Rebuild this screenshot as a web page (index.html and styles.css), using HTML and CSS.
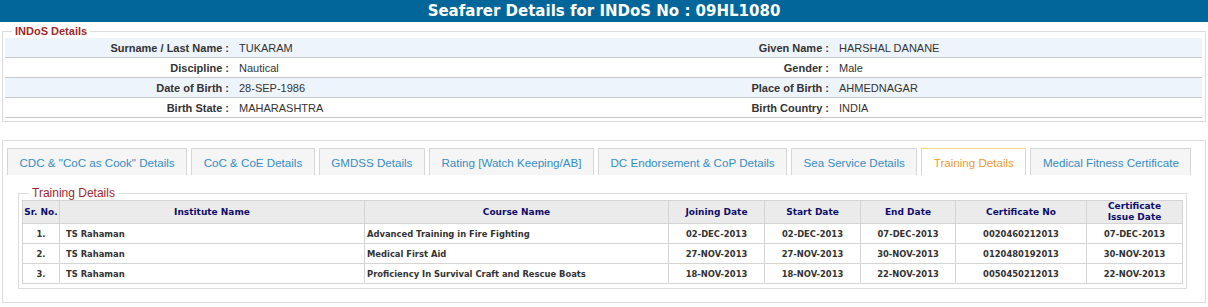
FILE: index.html
```html
<!DOCTYPE html>
<html lang="en">
<head>
    <meta charset="UTF-8">
    <meta name="viewport" content="width=device-width, initial-scale=1.0">
    <title>Seafarer Details</title>
    <link rel="stylesheet" href="styles.css">
</head>
<body>
    <div class="page-title">Seafarer Details for INDoS No : 09HL1080</div>

    <fieldset class="indos">
        <legend>INDoS Details</legend>
        <table class="info">
            <colgroup>
                <col style="width: 228px">
                <col style="width: 372px">
                <col style="width: 228px">
                <col>
            </colgroup>
            <tr class="alt">
                <th>Surname / Last Name :</th><td>TUKARAM</td>
                <th>Given Name :</th><td>HARSHAL DANANE</td>
            </tr>
            <tr>
                <th>Discipline :</th><td>Nautical</td>
                <th>Gender :</th><td>Male</td>
            </tr>
            <tr class="alt">
                <th>Date of Birth :</th><td>28-SEP-1986</td>
                <th>Place of Birth :</th><td>AHMEDNAGAR</td>
            </tr>
            <tr>
                <th>Birth State :</th><td>MAHARASHTRA</td>
                <th>Birth Country :</th><td>INDIA</td>
            </tr>
        </table>
    </fieldset>

    <div class="tab-box">
        <ul class="tabs">
            <li>CDC &amp; "CoC as Cook" Details</li>
            <li>CoC &amp; CoE Details</li>
            <li>GMDSS Details</li>
            <li>Rating [Watch Keeping/AB]</li>
            <li>DC Endorsement &amp; CoP Details</li>
            <li>Sea Service Details</li>
            <li class="active">Training Details</li>
            <li>Medical Fitness Certificate</li>
        </ul>

        <fieldset class="training">
            <legend>Training Details</legend>
            <table class="grid">
                <colgroup>
                    <col style="width: 37px">
                    <col style="width: 305px">
                    <col style="width: 304px">
                    <col style="width: 96px">
                    <col style="width: 96px">
                    <col style="width: 95px">
                    <col style="width: 131px">
                    <col style="width: 96px">
                </colgroup>
                <thead>
                    <tr>
                        <th>Sr. No.</th>
                        <th>Institute Name</th>
                        <th>Course Name</th>
                        <th>Joining Date</th>
                        <th>Start Date</th>
                        <th>End Date</th>
                        <th>Certificate No</th>
                        <th>Certificate<br>Issue Date</th>
                    </tr>
                </thead>
                <tbody>
                    <tr>
                        <td class="c">1.</td>
                        <td class="inst">TS Rahaman</td>
                        <td class="course">Advanced Training in Fire Fighting</td>
                        <td class="c">02-DEC-2013</td>
                        <td class="c">02-DEC-2013</td>
                        <td class="c">07-DEC-2013</td>
                        <td class="c">0020460212013</td>
                        <td class="c">07-DEC-2013</td>
                    </tr>
                    <tr>
                        <td class="c">2.</td>
                        <td class="inst">TS Rahaman</td>
                        <td class="course">Medical First Aid</td>
                        <td class="c">27-NOV-2013</td>
                        <td class="c">27-NOV-2013</td>
                        <td class="c">30-NOV-2013</td>
                        <td class="c">0120480192013</td>
                        <td class="c">30-NOV-2013</td>
                    </tr>
                    <tr>
                        <td class="c">3.</td>
                        <td class="inst">TS Rahaman</td>
                        <td class="course">Proficiency In Survival Craft and Rescue Boats</td>
                        <td class="c">18-NOV-2013</td>
                        <td class="c">18-NOV-2013</td>
                        <td class="c">22-NOV-2013</td>
                        <td class="c">0050450212013</td>
                        <td class="c">22-NOV-2013</td>
                    </tr>
                </tbody>
            </table>
        </fieldset>
    </div>
</body>
</html>
```

FILE: styles.css
```css
body {
    margin: 0;
    background: #fff;
    color: #333;
    font-family: "Liberation Sans", Arial, sans-serif;
    font-size: 11px;
}

.page-title {
    height: 22px;
    line-height: 22px;
    background: #03669a;
    color: #fff;
    text-align: center;
    font-family: "DejaVu Sans", Verdana, sans-serif;
    font-weight: bold;
    font-size: 15px;
}

/* INDoS block */
.indos {
    margin: 3px 2px 0;
    padding: 0 3px 3px 2px;
    border: 1px solid #dcdcdc;
}

.indos legend {
    margin-left: 7px;
    padding: 0 3px;
    line-height: 13px;
    font-size: 11px;
    font-weight: bold;
    color: #a0282d;
}

.info {
    width: 100%;
    border-collapse: collapse;
    table-layout: fixed;
}

.info th,
.info td {
    height: 19px;
    padding: 0;
    border-bottom: 1px solid #c8c8c8;
    font-size: 11px;
    color: #333;
    white-space: nowrap;
}

.info th {
    text-align: right;
    padding-right: 4px;
    font-weight: bold;
}

.info td {
    text-align: left;
    padding-left: 6px;
}

.info tr.alt {
    background: #eef4fb;
}

/* tabs box */
.tab-box {
    margin: 18px 2px 0;
    padding: 7px 4px 13px;
    border: 1px solid #dcdcdc;
}

.tabs {
    display: flex;
    gap: 4px;
    margin: 0;
    padding: 0;
    list-style: none;
}

.tabs li {
    height: 26px;
    line-height: 27px;
    padding: 0 11.5px;
    border: 1px solid #d6d6d6;
    border-bottom: none;
    background: #f5f5f5;
    color: #338ec6;
    font-size: 11.6px;
    white-space: nowrap;
    cursor: pointer;
}

.tabs li.active {
    background: #fff;
    border-color: #f3d68c;
    color: #ed9a30;
}

.training {
    margin: 11px 15px 0 11px;
    padding: 0 3px 4px 3px;
    border: 1px solid #dcdcdc;
}

.training legend {
    margin-left: 7px;
    padding: 0 3px;
    line-height: 14px;
    font-size: 12px;
    color: #a0282d;
}

.grid {
    width: 1160px;
    border-collapse: collapse;
    table-layout: fixed;
    font-family: "DejaVu Sans", Verdana, sans-serif;
}

.grid th,
.grid td {
    border: 1px solid #d4d4d4;
    padding: 0;
    white-space: nowrap;
}

.grid th {
    height: 22px;
    background: #ebebeb;
    color: #0d0d6b;
    font-size: 9px;
    line-height: 11px;
    font-weight: bold;
    text-align: center;
}

.grid td {
    height: 19px;
    font-size: 8.4px;
    font-weight: bold;
    color: #333;
}

.grid td.c {
    text-align: center;
}

.grid td.inst {
    padding-left: 6px;
}

.grid td.course {
    padding-left: 2px;
}
```
